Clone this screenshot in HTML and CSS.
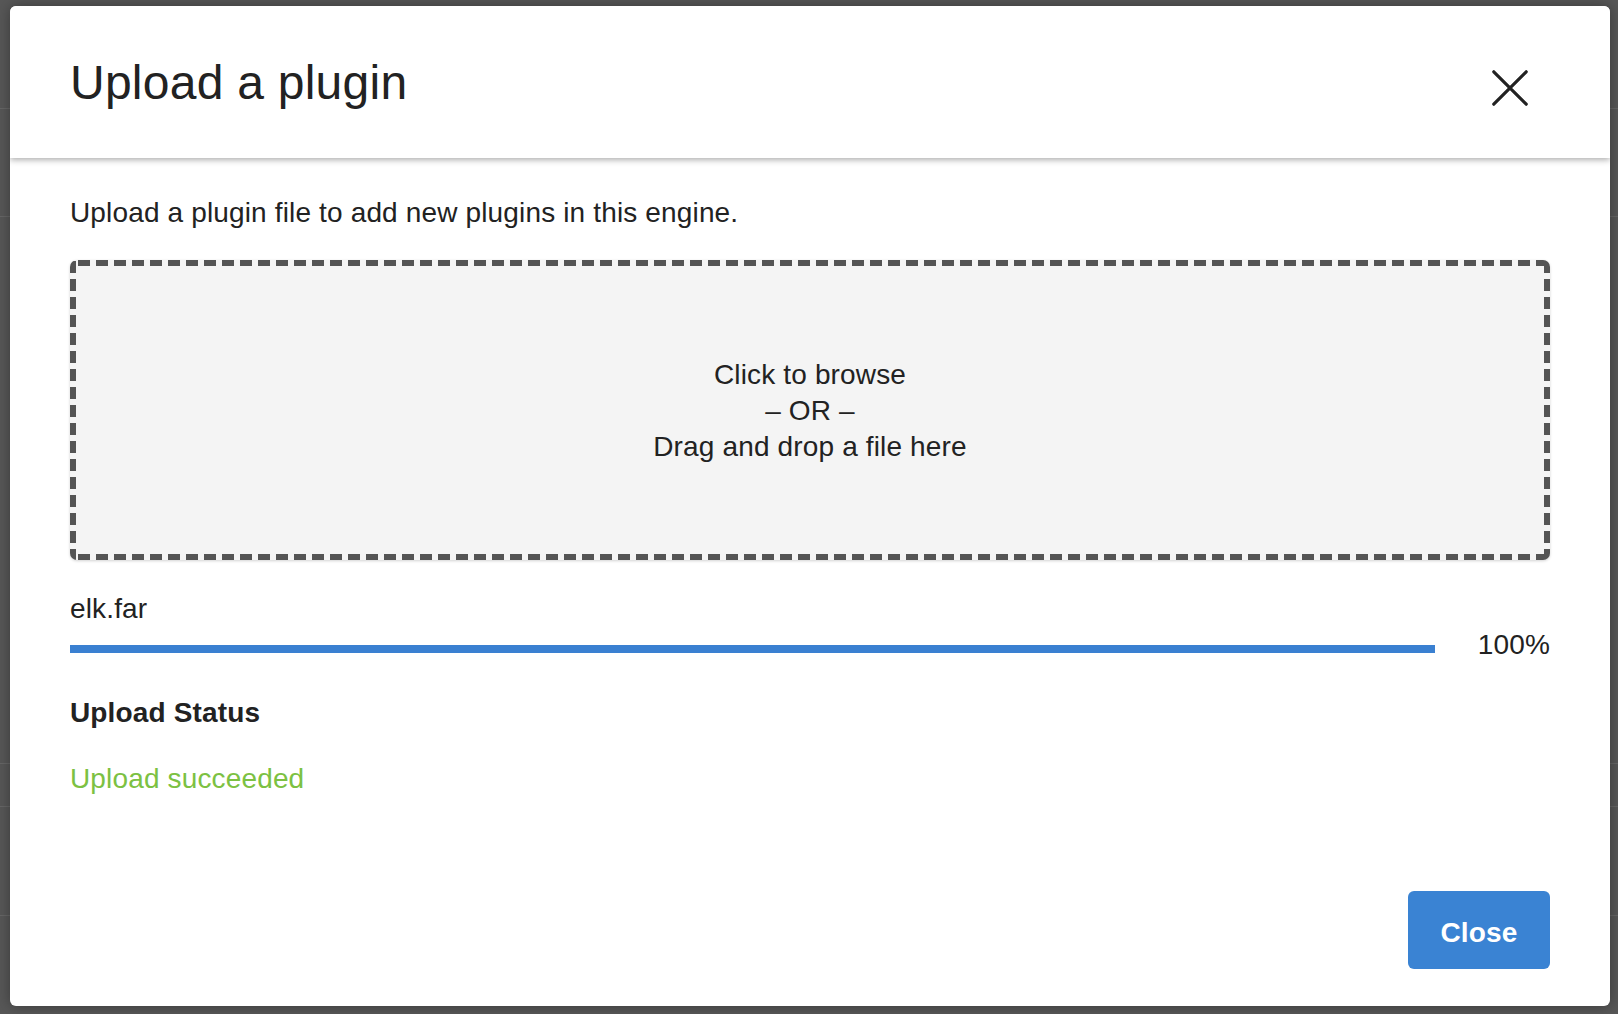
FILE: index.html
```html
<!DOCTYPE html>
<html lang="en">
<head>
<meta charset="utf-8">
<title>Upload a plugin</title>
<link rel="stylesheet" href="styles.css">
</head>
<body>
<div class="modal">
  <header class="modal-header">
    <h1 class="modal-title">Upload a plugin</h1>
    <button class="close-x" aria-label="Close">
      <svg width="36" height="36" viewBox="0 0 36 36"><path d="M1.8 1.8 L34.2 34.2 M34.2 1.8 L1.8 34.2" stroke="#222" stroke-width="3.2" stroke-linecap="round" fill="none"/></svg>
    </button>
  </header>
  <main class="modal-body">
    <p class="desc">Upload a plugin file to add new plugins in this engine.</p>
    <div class="dropzone">
      <div class="drop-text">
        <div>Click to browse</div>
        <div>– OR –</div>
        <div>Drag and drop a file here</div>
      </div>
    </div>
    <div class="file-name">elk.far</div>
    <div class="progress-row">
      <div class="progress-track"><div class="progress-fill" style="width:100%"></div></div>
      <div class="progress-pct">100%</div>
    </div>
    <h2 class="status-title">Upload Status</h2>
    <div class="status-ok">Upload succeeded</div>
  </main>
  <footer class="modal-footer">
    <button class="btn-primary">Close</button>
  </footer>
</div>
</body>
</html>
```
FILE: styles.css
```css
html, body {
  margin: 0;
  padding: 0;
}
body {
  width: 1618px;
  height: 1014px;
  overflow: hidden;
  box-sizing: border-box;
  padding: 6px 0 0 10px;
  background-color: #575757;
  background-image:
    linear-gradient(#666, #666),
    linear-gradient(#666, #666),
    linear-gradient(#666, #666),
    linear-gradient(#666, #666),
    linear-gradient(#666, #666);
  background-size: 100% 1px, 100% 1px, 100% 1px, 100% 1px, 100% 1px;
  background-position: 0 108px, 0 216px, 0 763px, 0 806px, 0 915px;
  background-repeat: no-repeat;
  font-family: "Liberation Sans", Arial, Helvetica, sans-serif;
  color: #222;
  letter-spacing: 0.15px;
}
.modal {
  width: 1600px;
  height: 1000px;
  background: #fff;
  border-radius: 6px;
  box-shadow: 0 0 14px rgba(0, 0, 0, 0.35);
  display: flex;
  flex-direction: column;
  overflow: hidden;
}
.modal-header {
  height: 152px;
  flex: none;
  box-sizing: border-box;
  padding: 2px 60px 0;
  display: flex;
  align-items: center;
  justify-content: space-between;
  box-shadow: 0 2px 6px rgba(0, 0, 0, 0.32);
  position: relative;
  z-index: 1;
  background: #fff;
}
.modal-title {
  margin: 0;
  font-size: 48px;
  line-height: 56px;
  font-weight: normal;
  letter-spacing: 0.25px;
  color: #222;
}
.close-x {
  border: 0;
  padding: 0;
  background: none;
  width: 36px;
  height: 36px;
  margin: 10px 22px 0 0;
  display: block;
  cursor: pointer;
}
.close-x svg {
  display: block;
}
.modal-body {
  flex: 1;
  padding: 35px 60px 0;
  display: flex;
  flex-direction: column;
}
.desc {
  margin: 0;
  font-size: 28px;
  line-height: 40px;
}
.dropzone {
  margin-top: 27px;
  height: 300px;
  box-sizing: border-box;
  border-radius: 7px;
  background-color: #f4f4f4;
  background-image:
    repeating-linear-gradient(90deg, #545454 0 12px, transparent 12px 18px),
    repeating-linear-gradient(90deg, #545454 0 12px, transparent 12px 18px),
    repeating-linear-gradient(180deg, #545454 0 12px, transparent 12px 18px),
    repeating-linear-gradient(180deg, #545454 0 12px, transparent 12px 18px);
  background-size: 100% 6px, 100% 6px, 6px 100%, 6px 100%;
  background-position: 8px 0, 8px 100%, 0 1px, 100% 1px;
  background-repeat: no-repeat;
  box-shadow: 0 1px 3px rgba(0, 0, 0, 0.18);
  display: flex;
  align-items: center;
  justify-content: center;
  cursor: pointer;
}
.drop-text {
  text-align: center;
  font-size: 28px;
  line-height: 36px;
  padding-top: 2px;
  color: #222;
}
.file-name {
  margin-top: 29px;
  font-size: 28px;
  line-height: 40px;
}
.progress-row {
  display: flex;
  align-items: flex-start;
  height: 32px;
}
.progress-track {
  flex: 1;
  height: 8px;
  margin-top: 16px;
  background: #e6e6e6;
}
.progress-fill {
  height: 100%;
  background: #3a80d1;
}
.progress-pct {
  margin-left: 43px;
  font-size: 28px;
  line-height: 32px;
}
.status-title {
  margin: 32px 0 0;
  font-size: 28px;
  line-height: 40px;
  font-weight: bold;
}
.status-ok {
  margin-top: 26px;
  font-size: 28px;
  line-height: 40px;
  color: #7cc142;
}
.modal-footer {
  flex: none;
  display: flex;
  justify-content: flex-end;
  padding: 0 60px 37px;
}
.btn-primary {
  width: 142px;
  height: 78px;
  box-sizing: border-box;
  padding: 5px 0 0;
  border: 0;
  border-radius: 6px;
  background: #3a83d3;
  color: #fff;
  font-family: "Liberation Sans", Arial, Helvetica, sans-serif;
  font-size: 28px;
  line-height: 73px;
  font-weight: bold;
  letter-spacing: 0.15px;
  cursor: pointer;
}
```
